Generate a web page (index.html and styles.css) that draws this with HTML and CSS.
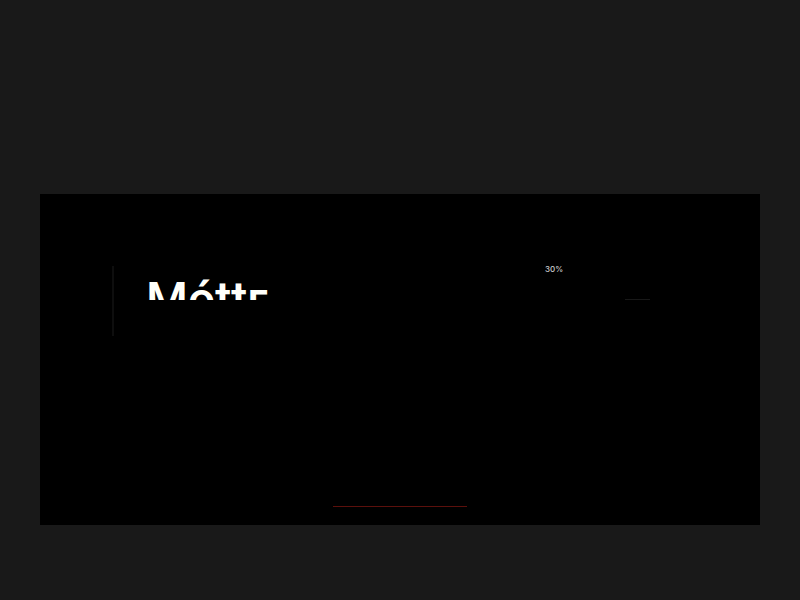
FILE: index.html
```
<!DOCTYPE html>
<html lang="en">
<head>
    <meta charset="UTF-8">
    <meta name="viewport" content="width=device-width, initial-scale=1.0">
    <title>Móttг</title>
    <link rel="stylesheet" href="styles.css">
</head>
<body>
    <main class="stage">
        <div class="intro">
            <div class="brand">
                <h1 class="brand-name">Móttг</h1>
            </div>
            <div class="status">
                <span class="percent">30%</span>
                <div class="rule"></div>
            </div>
        </div>
        <div class="progress"></div>
    </main>
</body>
</html>
```

FILE: styles.css
```
body {
    margin: 0;
    min-height: 100vh;
    box-sizing: border-box;
    padding: 194px 40px 75px;
    background: #191919;
    color: #fff;
    font-family: Inter, sans-serif;
    display: flex;
}

.stage {
    flex: 1;
    display: flex;
    flex-direction: column;
    justify-content: space-between;
    align-items: center;
    box-sizing: border-box;
    padding: 72px 72px 18px;
    background: #000;
}

.intro {
    display: grid;
    grid-template-columns: 3fr 1fr;
    width: 100%;
}

.brand {
    height: 70px;
    padding-left: 32px;
    border-left: 2px solid #0e0e0e;
}

.brand-name {
    height: 34px;
    margin: 0;
    overflow: hidden;
    color: #fffffa;
    font-family: Roboto, sans-serif;
    font-size: 48px;
    font-weight: 500;
    line-height: 68px;
}

.status {
    padding-left: 1px;
}

.percent {
    display: block;
    color: #ccc;
    font-size: 8px;
    font-weight: 500;
    line-height: 6px;
}

.rule {
    width: 25px;
    height: 1px;
    margin: 27px 0 0 80px;
    background: #181818;
}

.progress {
    width: 134px;
    height: 1px;
    background: #5c100c;
}
```
